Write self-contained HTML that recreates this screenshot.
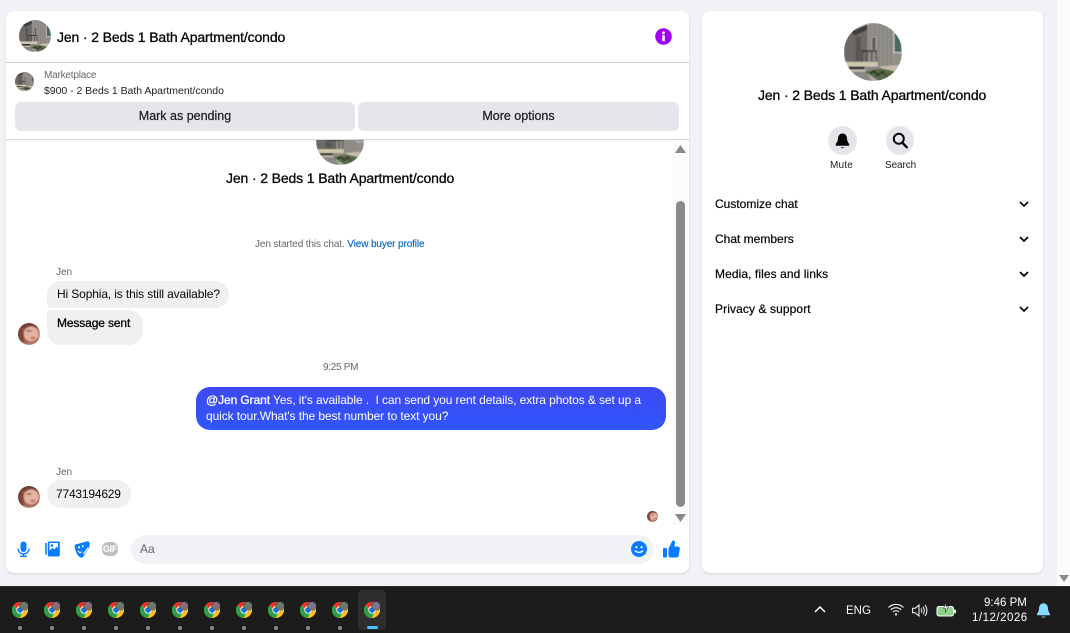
<!DOCTYPE html>
<html><head><meta charset="utf-8"><style>
html,body{margin:0;padding:0;width:1070px;height:633px;overflow:hidden;background:#f0f2f5;font-family:"Liberation Sans",sans-serif;color:#050505}
.a{position:absolute;white-space:nowrap}
svg{position:absolute;display:block}
.card{position:absolute;background:#fff;border-radius:8px;box-shadow:0 1px 2px rgba(0,0,0,.12)}
.bub{position:absolute;background:#f0f0f0}
.btn{position:absolute;background:#e4e6eb;border-radius:6px;top:102px;height:29px;text-align:center;font-size:12.5px;line-height:28px;color:#1c1e21;-webkit-text-stroke:.25px #1c1e21}
.b{-webkit-text-stroke:.3px currentColor}
.h{font-size:14px;line-height:18px;letter-spacing:-.13px}
.m{font-size:12px;line-height:16px;letter-spacing:-.13px}
.dot{position:absolute;top:626px;width:4px;height:4px;border-radius:2px;background:#8a8a8a}
.badge{position:absolute;top:602px;width:8px;height:8px;border-radius:50%;box-shadow:0 0 0 .5px #333}
.r{font-size:12px;line-height:15px;-webkit-text-stroke-width:.2px}
</style></head><body>
<svg width="0" height="0" style="position:absolute">
<defs>
<clipPath id="c"><circle cx="50" cy="50" r="50"/></clipPath>
<filter id="bl" x="-5%" y="-5%" width="110%" height="110%"><feGaussianBlur stdDeviation="1"/></filter>
<filter id="bl2" x="-10%" y="-10%" width="120%" height="120%"><feGaussianBlur stdDeviation="4"/></filter>
<symbol id="house" viewBox="0 0 100 100"><g clip-path="url(#c)"><g filter="url(#bl)">
<rect width="100" height="100" fill="#8a8782"/>
<rect width="42" height="18" fill="#dcdddd"/>
<polygon points="0,18 22,14 42,6 42,70 0,70" fill="#6c6966"/>
<polygon points="12,14 40,2 44,10 18,22" fill="#3f3e3c"/>
<rect x="20" y="24" width="9" height="42" fill="#5a5754"/>
<polygon points="40,4 54,0 100,0 100,76 40,76" fill="#928f89"/>
<path d="M46 5V72M53 2V72M60 0V74M67 0V75M74 0V76M81 0V77" stroke="#83807a" stroke-width="1.6"/>
<rect x="86" y="17" width="14" height="34" fill="#4a6a5c" stroke="#d0d0cc" stroke-width="2"/>
<rect x="48" y="24" width="7" height="23" fill="#5a5855" stroke="#c8c7c2" stroke-width="1"/>
<rect x="30" y="47" width="27" height="2.500" fill="#2e2d2a"/>
<path d="M31 48V70M56 48V72M40 48V68M48 48V68" stroke="#3b3a36" stroke-width="1.6"/>
<rect x="2" y="67" width="56" height="8" fill="#cfc8ae"/>
<rect x="9" y="75" width="26" height="5" fill="#33322f"/>
<rect x="3" y="80" width="34" height="4" fill="#c3bda9"/>
<polygon points="60,75 100,72 100,86 72,84" fill="#c3bdaa"/>
<polygon points="0,84 38,84 60,100 0,100" fill="#898883"/>
<polygon points="36,84 64,78 90,84 80,100 56,100" fill="#5a6a4c"/>
<path d="M44 88l8-5 6 7 8-6 8 7" stroke="#2f422b" stroke-width="4" fill="none"/>
<circle cx="60" cy="84" r="1.500" fill="#b5524a"/><circle cx="72" cy="87" r="1.500" fill="#b5524a"/>
<polygon points="40,86 60,100 48,100" fill="#b0ada5"/>
</g></g></symbol>
<symbol id="face" viewBox="0 0 100 100"><g clip-path="url(#c)"><g filter="url(#bl2)">
<rect width="100" height="100" fill="#a35f50"/>
<ellipse cx="50" cy="4" rx="60" ry="22" fill="#6f3c30"/>
<ellipse cx="60" cy="50" rx="34" ry="34" fill="#e6b3a2"/>
<ellipse cx="5" cy="60" rx="22" ry="50" fill="#7d4437"/>
<ellipse cx="50" cy="36" rx="12" ry="4" fill="#7a5248"/>
<ellipse cx="68" cy="68" rx="12" ry="6" fill="#c06e68"/>
<rect x="0" y="90" width="100" height="12" fill="#ad7c6b"/>
</g></g></symbol>
<symbol id="chrome" viewBox="0 0 24 24">
<circle cx="12" cy="12" r="12" fill="#fbc02d"/>
<path d="M12 0a12 12 0 0 1 10.400 6H12a6 6 0 0 0-5.600 3.800L2.600 4.300A12 12 0 0 1 12 0z" fill="#e2372d"/>
<path d="M2.600 4.300l5 8.700A5 5 0 0 0 14.800 17L11.600 24A12 12 0 0 1 2.600 4.300z" fill="#2f9e46"/>
<circle cx="12" cy="12" r="5.500" fill="#fff"/><circle cx="12" cy="12" r="4.300" fill="#1a73e8"/>
</symbol>
</defs></svg>

<div class="a" style="left:1057px;top:0;width:13px;height:586px;background:#fbfbfb"></div>
<svg style="left:1059px;top:575px" width="10" height="7"><polygon points="0,0 10,0 5,7" fill="#8a8a8a"/></svg>

<div class="card" style="left:6px;top:11px;width:683px;height:562px"></div>
<svg style="left:19px;top:20px" width="32" height="32"><use href="#house" width="32" height="32"/></svg>
<div class="a b h" style="left:57px;top:28px">Jen · 2 Beds 1 Bath Apartment/condo</div>
<svg style="left:655px;top:28px" width="17" height="17" viewBox="0 0 17 17"><circle cx="8.500" cy="8.500" r="8.300" fill="#a100f2"/><circle cx="8.500" cy="4.800" r="1.400" fill="#fff"/><rect x="7.200" y="7.200" width="2.600" height="6" rx=".6" fill="#fff"/></svg>
<div class="a" style="left:6px;top:62px;width:683px;height:1px;background:#c9ccd3"></div>
<svg style="left:15px;top:72px" width="19" height="19"><use href="#house" width="19" height="19"/></svg>
<div class="a" style="left:44px;top:69px;font-size:10px;line-height:13px;color:#65676b;letter-spacing:-.2px">Marketplace</div>
<div class="a" style="left:44px;top:85px;font-size:10.5px;line-height:13px;color:#1c1e21;letter-spacing:-.03px">$900 - 2 Beds 1 Bath Apartment/condo</div>
<div class="btn" style="left:15px;width:340px">Mark as pending</div>
<div class="btn" style="left:358px;width:321px">More options</div>
<div class="a" style="left:6px;top:139px;width:683px;height:1px;background:#d4d6da;box-shadow:0 1px 1px rgba(0,0,0,.06)"></div>

<div class="a" style="left:673px;top:140px;width:15px;height:385px;background:#fbfbfb"></div>
<svg style="left:675px;top:145px" width="11" height="8"><polygon points="5.500,0 11,8 0,8" fill="#8a8a8a"/></svg>
<div class="a" style="left:676px;top:201px;width:9px;height:306px;border-radius:4.5px;background:#8a8a8a"></div>
<svg style="left:675px;top:514px" width="11" height="8"><polygon points="0,0 11,0 5.500,8" fill="#8a8a8a"/></svg>

<div class="a" style="left:316px;top:140px;width:48px;height:25px;overflow:hidden"><svg style="left:0;top:-23px" width="48" height="48"><use href="#house" width="48" height="48"/></svg></div>
<div class="a b h" style="left:226px;top:169px">Jen · 2 Beds 1 Bath Apartment/condo</div>
<div class="a" style="left:255px;top:238px;font-size:10px;line-height:13px;color:#65676b;letter-spacing:-.12px">Jen started this chat. <span class="b" style="color:#0866c6;-webkit-text-stroke:.15px #0866c6">View buyer profile</span></div>

<div class="a" style="left:56px;top:266px;font-size:10px;line-height:13px;color:#65676b">Jen</div>
<div class="bub" style="left:47px;top:281px;width:182px;height:27px;border-radius:14px 14px 14px 4px"></div>
<div class="a m" style="left:57px;top:286px">Hi Sophia, is this still available?</div>
<div class="bub" style="left:47px;top:310px;width:96px;height:35px;border-radius:4px 14px 14px 14px"></div>
<div class="a b m" style="left:57px;top:315px">Message sent</div>
<svg style="left:18px;top:323px" width="22" height="22"><use href="#face" width="22" height="22"/></svg>

<div class="a" style="left:323px;top:361px;font-size:10px;line-height:13px;color:#65676b;letter-spacing:-.3px">9:25 PM</div>

<div class="a" style="left:196px;top:387px;width:470px;height:43px;border-radius:14px;background:linear-gradient(#3f48f5,#2f56fb)"></div>
<div class="a" style="left:206px;top:392px;font-size:12px;line-height:16px;color:#fff;letter-spacing:-.09px"><span class="b">@Jen Grant</span> Yes, it's available .&nbsp; I can send you rent details, extra photos &amp; set up a<br>quick tour.What's the best number to text you?</div>

<div class="a" style="left:56px;top:466px;font-size:10px;line-height:13px;color:#65676b">Jen</div>
<div class="bub" style="left:47px;top:480px;width:84px;height:28px;border-radius:14px"></div>
<div class="a" style="left:56px;top:486px;font-size:12px;line-height:16px;letter-spacing:-.2px">7743194629</div>
<svg style="left:18px;top:486px" width="22" height="22"><use href="#face" width="22" height="22"/></svg>
<svg style="left:647px;top:511px" width="11" height="11"><use href="#face" width="11" height="11"/></svg>

<svg style="left:17px;top:541px" width="13" height="16" viewBox="0 0 13 16"><rect x="3.500" y="0.500" width="6" height="10.500" rx="3" fill="#0a7cff"/><path d="M1 7.500a5.500 5.500 0 0 0 11 0" fill="none" stroke="#0a7cff" stroke-width="1.300"/><path d="M6.500 13v2M3 15.300h7" stroke="#0a7cff" stroke-width="1.300"/></svg>
<svg style="left:45px;top:541px" width="15" height="16" viewBox="0 0 15 16"><path d="M1 2V13.500" stroke="#0a7cff" stroke-width="1.600"/><rect x="2.800" y="0.500" width="12" height="15" rx="1.500" fill="#0a7cff"/><rect x="4.500" y="2" width="8.500" height="7.500" fill="#fff"/><circle cx="7" cy="4.500" r="1.300" fill="#0a7cff"/><path d="M4.500 9.500l3-2.500 2 1.500 2-3 1.500 2v2z" fill="#0a7cff"/></svg>
<svg style="left:74px;top:541px" width="16" height="17" viewBox="0 0 16 17"><path d="M1.500 3.500L13 .4q2.400-.4 2.700 1.800L15.200 7 9 16q-1.300 1-2.800.4Q2 14 .7 6q-.3-2 .8-2.500z" fill="#0a7cff"/><circle cx="5" cy="6.300" r="1.100" fill="#fff"/><circle cx="8.800" cy="5.300" r="1" fill="#fff"/><path d="M4 9.800q1.500 2.600 3.800 1" stroke="#fff" stroke-width="1.100" fill="none"/><path d="M9.500 13l5-6.500" stroke="#fff" stroke-width="1.300"/></svg>
<div class="a" style="left:102px;top:542px;width:16px;height:14px;border-radius:6px;background:#bcc0c4;color:#fff;font-size:9px;font-weight:700;line-height:14px;text-align:center;letter-spacing:-.3px">GIF</div>
<div class="a" style="left:131px;top:535px;width:523px;height:29px;border-radius:15px;background:#f0f2f5"></div>
<div class="a" style="left:140px;top:542px;font-size:12px;line-height:15px;color:#65676b">Aa</div>
<svg style="left:631px;top:541px" width="16" height="16" viewBox="0 0 16 16"><circle cx="8" cy="8" r="8" fill="#0a7cff"/><circle cx="5.400" cy="6.200" r="1.100" fill="#fff"/><circle cx="10.600" cy="6.200" r="1.100" fill="#fff"/><path d="M3.800 9.600q4.200 3.600 8.400 0" stroke="#fff" stroke-width="1.300" fill="none"/></svg>
<svg style="left:663px;top:540px" width="17" height="18" viewBox="0 0 17 18"><rect x="0" y="8" width="4" height="9.500" rx="1" fill="#0a7cff"/><path d="M5.500 8.500L9 1.500q.6-1.300 2-.9 1.500.6 1 2.500L11.400 6.500H15q2 .3 1.800 2.400l-1 6.600q-.4 2-2.300 2H8q-1.500 0-2.500-1z" fill="#0a7cff"/></svg>

<div class="card" style="left:702px;top:11px;width:341px;height:562px"></div>
<svg style="left:844px;top:23px" width="58" height="58"><use href="#house" width="58" height="58"/></svg>
<div class="a b h" style="left:758px;top:86px">Jen · 2 Beds 1 Bath Apartment/condo</div>
<div class="a" style="left:828px;top:126px;width:29px;height:29px;border-radius:50%;background:#e4e6eb"></div>
<svg style="left:835px;top:133px" width="15" height="16" viewBox="0 0 15 16"><path d="M7.500 0.500C4.500.5 3 3 3 5.500c0 3-2 4.500-2.300 6-.2.8.3 1.300 1 1.300h11.600c.7 0 1.200-.5 1-1.300-.3-1.500-2.300-3-2.300-6C12 3 10.500.5 7.500.5z" fill="#050505"/><path d="M5.500 14.400h4q-2 1.600-4 0z" fill="#050505"/></svg>
<div class="a" style="left:886px;top:126px;width:28px;height:29px;border-radius:50%;background:#e4e6eb"></div>
<svg style="left:892px;top:132px" width="16" height="17" viewBox="0 0 16 17"><circle cx="6.800" cy="6.800" r="5" fill="none" stroke="#050505" stroke-width="2"/><path d="M10.500 10.800l4.200 4.400" stroke="#050505" stroke-width="2.400" stroke-linecap="round"/></svg>
<div class="a" style="left:830px;top:159px;font-size:10px;line-height:13px;color:#1c1e21;letter-spacing:.2px">Mute</div>
<div class="a" style="left:885px;top:159px;font-size:10px;line-height:13px;color:#1c1e21;letter-spacing:-.1px">Search</div>

<div class="a b r" style="left:715px;top:197px">Customize chat</div>
<div class="a b r" style="left:715px;top:232px">Chat members</div>
<div class="a b r" style="left:715px;top:267px;letter-spacing:.08px">Media, files and links</div>
<div class="a b r" style="left:715px;top:302px;letter-spacing:.1px">Privacy &amp; support</div>
<svg style="left:1019px;top:201px" width="10" height="7"><path d="M1 1l4 4 4-4" fill="none" stroke="#050505" stroke-width="1.700"/></svg>
<svg style="left:1019px;top:236px" width="10" height="7"><path d="M1 1l4 4 4-4" fill="none" stroke="#050505" stroke-width="1.700"/></svg>
<svg style="left:1019px;top:271px" width="10" height="7"><path d="M1 1l4 4 4-4" fill="none" stroke="#050505" stroke-width="1.700"/></svg>
<svg style="left:1019px;top:306px" width="10" height="7"><path d="M1 1l4 4 4-4" fill="none" stroke="#050505" stroke-width="1.700"/></svg>

<div class="a" style="left:0;top:586px;width:1070px;height:47px;background:#1c1c1c;border-top:1px solid #2a2a2a;box-sizing:border-box"></div>
<div class="a" style="left:358px;top:590px;width:28px;height:40px;border-radius:4px;background:#2e2e2e"></div>
<svg style="left:12px;top:602px" width="16" height="16"><use href="#chrome" width="16" height="16"/></svg>
<svg style="left:44px;top:602px" width="16" height="16"><use href="#chrome" width="16" height="16"/></svg>
<svg style="left:76px;top:602px" width="16" height="16"><use href="#chrome" width="16" height="16"/></svg>
<svg style="left:108px;top:602px" width="16" height="16"><use href="#chrome" width="16" height="16"/></svg>
<svg style="left:140px;top:602px" width="16" height="16"><use href="#chrome" width="16" height="16"/></svg>
<svg style="left:172px;top:602px" width="16" height="16"><use href="#chrome" width="16" height="16"/></svg>
<svg style="left:204px;top:602px" width="16" height="16"><use href="#chrome" width="16" height="16"/></svg>
<svg style="left:236px;top:602px" width="16" height="16"><use href="#chrome" width="16" height="16"/></svg>
<svg style="left:268px;top:602px" width="16" height="16"><use href="#chrome" width="16" height="16"/></svg>
<svg style="left:300px;top:602px" width="16" height="16"><use href="#chrome" width="16" height="16"/></svg>
<svg style="left:332px;top:602px" width="16" height="16"><use href="#chrome" width="16" height="16"/></svg>
<svg style="left:364px;top:602px" width="16" height="16"><use href="#chrome" width="16" height="16"/></svg>
<div class="badge" style="left:20px;background:#6d7a74"></div>
<div class="badge" style="left:52px;background:#85707a"></div>
<div class="badge" style="left:84px;background:#85707a"></div>
<div class="badge" style="left:116px;background:#6d7a74"></div>
<div class="badge" style="left:148px;background:#6d7a74"></div>
<div class="badge" style="left:180px;background:#85707a"></div>
<div class="badge" style="left:212px;background:#85707a"></div>
<div class="badge" style="left:244px;background:#6d7a74"></div>
<div class="badge" style="left:276px;background:#6d7a74"></div>
<div class="badge" style="left:308px;background:#7a7590"></div>
<div class="badge" style="left:340px;background:#6d7a74"></div>
<div class="badge" style="left:372px;background:#7a7590"></div>
<div class="dot" style="left:18px"></div><div class="dot" style="left:50px"></div><div class="dot" style="left:82px"></div><div class="dot" style="left:114px"></div><div class="dot" style="left:146px"></div><div class="dot" style="left:178px"></div><div class="dot" style="left:210px"></div><div class="dot" style="left:242px"></div><div class="dot" style="left:274px"></div><div class="dot" style="left:306px"></div><div class="dot" style="left:338px"></div>
<div class="a" style="left:367px;top:626px;width:11px;height:3px;border-radius:2px;background:#4cc2ff"></div>

<svg style="left:814px;top:605px" width="12" height="9"><path d="M1 7l5-5 5 5" fill="none" stroke="#fff" stroke-width="1.500"/></svg>
<div class="a" style="left:846px;top:604px;font-size:11.5px;line-height:14px;color:#fff">ENG</div>
<svg style="left:888px;top:603px" width="16" height="13" viewBox="0 0 16 13"><path d="M.6 4.500a10.500 10.500 0 0 1 14.800 0M2.800 6.800a7.400 7.400 0 0 1 10.400 0M5 9a4.200 4.200 0 0 1 6 0" fill="none" stroke="#fff" stroke-width="1.100"/><circle cx="8" cy="11.400" r="1.100" fill="#fff"/></svg>
<svg style="left:912px;top:604px" width="17" height="13" viewBox="0 0 17 13"><path d="M.6 4.200h2.600L7 1v11L3.200 8.800H.6z" fill="none" stroke="#fff" stroke-width="1"/><path d="M9 4.500a3 3 0 0 1 0 4M11 2.800a6 6 0 0 1 0 7.500M13 1a9 9 0 0 1 0 11" fill="none" stroke="#fff" stroke-width="1"/></svg>
<svg style="left:936px;top:602px" width="21" height="15" viewBox="0 0 21 15"><rect x="1" y="4.500" width="16.500" height="9.500" rx="2" fill="#8fd18a" stroke="#fff" stroke-width="1"/><rect x="18" y="7.500" width="2" height="4" rx="1" fill="#fff"/><path d="M10.500 0L7.500 6.500h2.500l-1 4 3.500-6H10z" fill="#fff" stroke="#1c1c1c" stroke-width=".5"/></svg>
<div class="a" style="left:984px;top:596px;font-size:11.5px;line-height:15px;color:#fff">9:46 PM</div>
<div class="a" style="left:972px;top:611px;font-size:11.5px;line-height:15px;color:#fff;letter-spacing:.5px">1/12/2026</div>
<svg style="left:1036px;top:603px" width="15" height="16" viewBox="0 0 15 16"><path d="M7.500.3C4.500.3 3 3 3 5.500c0 3-1.600 4.300-2 5.500-.2.800.2 1.300 1 1.300h11c.8 0 1.200-.5 1-1.300-.4-1.200-2-2.500-2-5.500C12 3 10.500.3 7.500.3z" fill="#86dbff"/><path d="M5 13.600h5q-2.500 2.100-5 0z" fill="#86dbff"/></svg>
</body></html>
